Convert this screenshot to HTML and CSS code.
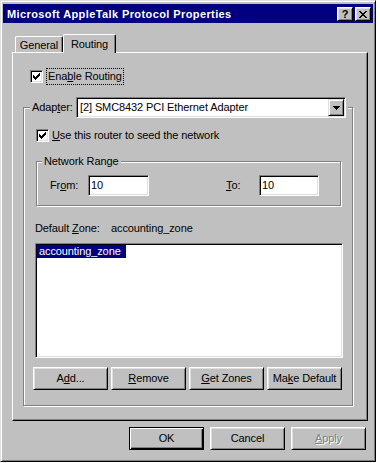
FILE: index.html
```html
<!DOCTYPE html>
<html>
<head>
<meta charset="utf-8">
<title>Microsoft AppleTalk Protocol Properties</title>
<link rel="stylesheet" href="styles.css">
</head>
<body>
<div class="window">
  <div class="titlebar">
    <span class="title">Microsoft AppleTalk Protocol Properties</span>
    <div class="caption-btns">
      <span class="cbtn help">?</span>
      <span class="cbtn close"><svg width="8" height="7" viewBox="0 0 8 7" shape-rendering="crispEdges"><path d="M0 0h2v1H0zM6 0h2v1H6zM1 1h2v1H1zM5 1h2v1H5zM2 2h4v1H2zM3 3h2v1H3zM2 4h4v1H2zM1 5h2v1H1zM5 5h2v1H5zM0 6h2v1H0zM6 6h2v1H6z" fill="#000"/></svg></span>
    </div>
  </div>

  <div class="tabs">
    <div class="tab general">General</div>
    <div class="tab selected">Routing</div>
  </div>

  <div class="panel">
    <div class="check-row enable">
      <span class="checkbox"><svg width="7" height="7" viewBox="0 0 7 7" shape-rendering="crispEdges"><path d="M6 0h1v1H6zM5 1h2v1H5zM0 2h1v1H0zM4 2h3v1H4zM0 3h2v1H0zM3 3h3v1H3zM0 4h5v1H0zM1 5h3v1H1zM2 6h1v1H2z" fill="#000"/></svg></span>
      <span class="label focus">Ena<u>b</u>le Routing</span>
    </div>

    <fieldset class="group adapter">
      <legend class="adapter-legend">
        <div class="legend-inner">
          <span>Adap<u>t</u>er:</span>
          <div class="combo">
            <span class="combo-text">[2] SMC8432 PCI Ethernet Adapter</span>
            <span class="combo-btn"><svg width="7" height="4" viewBox="0 0 7 4" shape-rendering="crispEdges"><path d="M0 0h7v1H0zM1 1h5v1H1zM2 2h3v1H2zM3 3h1v1H3z" fill="#000"/></svg></span>
          </div>
        </div>
      </legend>
      <div class="group-body">
        <div class="check-row seed">
          <span class="checkbox"><svg width="7" height="7" viewBox="0 0 7 7" shape-rendering="crispEdges"><path d="M6 0h1v1H6zM5 1h2v1H5zM0 2h1v1H0zM4 2h3v1H4zM0 3h2v1H0zM3 3h3v1H3zM0 4h5v1H0zM1 5h3v1H1zM2 6h1v1H2z" fill="#000"/></svg></span>
          <span class="label"><u>U</u>se this router to seed the network</span>
        </div>

        <fieldset class="group range">
          <legend>Network Range</legend>
          <div class="range-body">
            <span class="from-lbl">Fr<u>o</u>m:</span>
            <span class="edit from-edit">10</span>
            <span class="to-lbl"><u>T</u>o:</span>
            <span class="edit to-edit">10</span>
          </div>
        </fieldset>

        <div class="zone-row">
          <span class="zone-lbl">Default <u>Z</u>one:</span>
          <span>accounting_zone</span>
        </div>

        <div class="listbox">
          <span class="item sel">accounting_zone</span>
        </div>

        <div class="btn-row">
          <div class="btn">A<u>d</u>d...</div>
          <div class="btn"><u>R</u>emove</div>
          <div class="btn"><u>G</u>et Zones</div>
          <div class="btn">Ma<u>k</u>e Default</div>
        </div>
      </div>
    </fieldset>
  </div>

  <div class="dlg-buttons">
    <div class="btn default">OK</div>
    <div class="btn">Cancel</div>
    <div class="btn disabled"><u>A</u>pply</div>
  </div>
</div>
</body>
</html>
```
FILE: styles.css
```css
* { box-sizing: border-box; }

body {
  margin: 0;
  background: #fff;
  font-family: "Liberation Sans", Arial, sans-serif;
  font-size: 11px;
  line-height: 13px;
  letter-spacing: -0.1px;
  color: #000;
}

u { text-underline-offset: 1px; }

.window {
  width: 376px;
  height: 462px;
  background: #c0c0c0;
  border: 1px solid;
  border-color: #dfdfdf #000 #000 #dfdfdf;
  box-shadow: inset 1px 1px #fff, inset -1px -1px #808080;
  padding: 3px 2px 2px 2px;
  display: flex;
  flex-direction: column;
}

.titlebar {
  flex: none;
  height: 19px;
  background: #000080;
  color: #fff;
  display: flex;
  align-items: center;
  justify-content: space-between;
  padding: 1px 2px 0 4px;
}

.title {
  font-weight: bold;
  letter-spacing: 0.4px;
}

.caption-btns {
  display: flex;
  gap: 2px;
}

.cbtn {
  width: 16px;
  height: 14px;
  background: #c0c0c0;
  border: 1px solid;
  border-color: #fff #000 #000 #fff;
  box-shadow: inset 1px 1px #dfdfdf, inset -1px -1px #808080;
  display: flex;
  align-items: center;
  justify-content: center;
  color: #000;
}

.cbtn.help {
  font-weight: bold;
  font-size: 11px;
  line-height: 12px;
  letter-spacing: 0;
}

.tabs {
  flex: none;
  display: flex;
  align-items: flex-end;
  height: 18px;
  margin: 11px 0 0 12px;
}

.tab {
  height: 16px;
  padding-top: 2px;
  text-align: center;
  background: #c0c0c0;
  border: 1px solid;
  border-color: #fff #000 #000 #fff;
  border-bottom: 0;
  box-shadow: inset -1px 0 #808080;
  border-radius: 2px 2px 0 0;
}

.tab.general { width: 48px; }

.tab.selected {
  width: 53px;
  height: 19px;
  margin-bottom: -1px;
  padding-top: 3px;
  position: relative;
  z-index: 1;
}

.panel {
  flex: none;
  height: 369px;
  margin: 0 5px 0 9px;
  border: 1px solid;
  border-color: #fff #000 #000 #fff;
  box-shadow: inset -1px -1px #808080;
  padding: 15px 14px 0 10px;
}

.check-row {
  display: flex;
  align-items: center;
  height: 17px;
}

.enable { margin-left: 7px; }
.seed { margin-left: 2px; }

.checkbox {
  flex: none;
  width: 13px;
  height: 13px;
  background: #fff;
  border: 1px solid;
  border-color: #808080 #fff #fff #808080;
  box-shadow: inset 1px 1px #000, inset -1px -1px #dfdfdf;
  display: flex;
  align-items: center;
  justify-content: center;
}

.checkbox svg { display: block; }

.label {
  margin-left: 3px;
  padding: 1px;
  border: 1px dotted transparent;
  white-space: nowrap;
}

.seed .label { margin-left: 1px; }

.label.focus { border-color: #000; }

.group {
  margin: 0;
  padding: 0;
  min-width: 0;
  border: 1px solid #808080;
  box-shadow: inset 1px 1px #fff, 1px 1px #fff;
}

.adapter { margin-top: 12px; }

.adapter-legend {
  margin-left: 6px;
  padding: 0 2px;
  width: 318px;
  height: 21px;
  background: #c0c0c0;
}

.legend-inner {
  height: 21px;
  display: flex;
  align-items: center;
  justify-content: space-between;
}

.combo {
  width: 270px;
  height: 21px;
  background: #fff;
  border: 1px solid;
  border-color: #808080 #fff #fff #808080;
  box-shadow: inset 1px 1px #000, inset -1px -1px #dfdfdf;
  padding: 1px;
  display: flex;
  align-items: center;
}

.combo-text {
  flex: 1;
  padding-left: 2px;
  white-space: nowrap;
}

.combo-btn {
  flex: none;
  width: 16px;
  height: 17px;
  background: #c0c0c0;
  border: 1px solid;
  border-color: #dfdfdf #000 #000 #dfdfdf;
  box-shadow: inset 1px 1px #fff, inset -1px -1px #808080;
  display: flex;
  align-items: center;
  justify-content: center;
}

.combo-btn svg { display: block; }

.group-body {
  padding: 9px 9px 15px 10px;
}

.range { margin: 11px 2px 0 2px; }

.range > legend {
  margin-left: 5px;
  padding: 0 2px;
  line-height: 13px;
  background: #c0c0c0;
}

.range-body {
  display: flex;
  align-items: center;
  padding: 7px 0 9px 13px;
}

.from-lbl { width: 38px; flex: none; }
.to-lbl { width: 33px; margin-left: 77px; flex: none; }

.edit {
  flex: none;
  height: 21px;
  background: #fff;
  border: 1px solid;
  border-color: #808080 #fff #fff #808080;
  box-shadow: inset 1px 1px #000, inset -1px -1px #dfdfdf;
  padding: 0 2px;
  line-height: 19px;
}

.from-edit { width: 61px; }
.to-edit { width: 60px; }

.zone-row {
  display: flex;
  margin: 16px 0 0 1px;
  height: 13px;
}

.zone-lbl { width: 76px; flex: none; }

.listbox {
  margin: 8px 0 0 1px;
  height: 115px;
  background: #fff;
  border: 1px solid;
  border-color: #808080 #fff #fff #808080;
  box-shadow: inset 1px 1px #000, inset -1px -1px #dfdfdf;
  padding: 1px;
  display: flex;
  align-items: flex-start;
}

.item.sel {
  background: #000080;
  color: #fff;
  padding: 0 5px 0 2px;
  line-height: 13px;
}

.btn-row {
  display: flex;
  gap: 3px;
  margin: 9px 0 0 -1px;
}

.btn {
  flex: none;
  width: 75px;
  height: 23px;
  display: flex;
  align-items: center;
  justify-content: center;
  background: #c0c0c0;
  border: 1px solid;
  border-color: #fff #000 #000 #fff;
  box-shadow: inset 1px 1px #dfdfdf, inset -1px -1px #808080;
  white-space: nowrap;
}

.btn.default {
  border-color: #000;
  box-shadow: inset 1px 1px #fff, inset -1px -1px #000, inset -2px -2px #808080;
}

.btn.disabled {
  color: #808080;
  text-shadow: 1px 1px #fff;
}

.dlg-buttons {
  flex: none;
  display: flex;
  justify-content: flex-end;
  gap: 6px;
  margin-top: 6px;
  padding-right: 7px;
}
```
